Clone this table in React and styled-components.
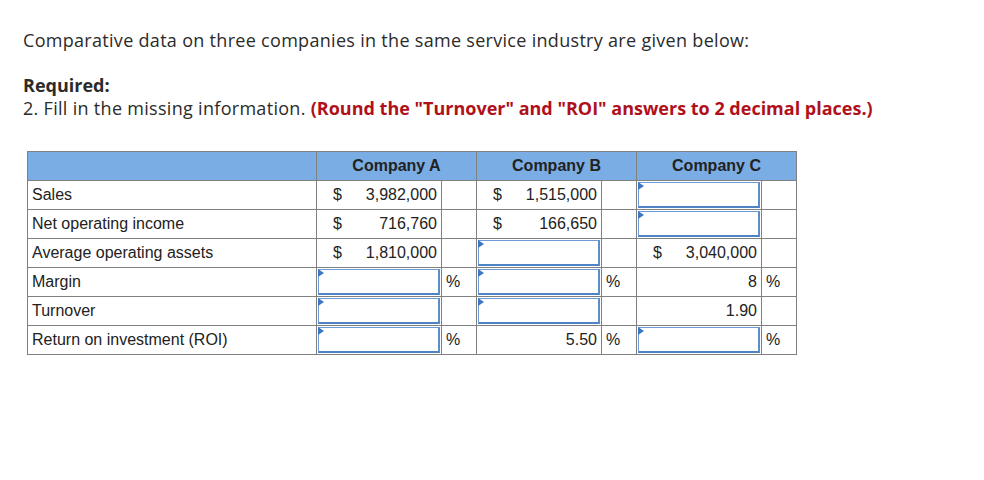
import React from "react";
import styled, { createGlobalStyle } from "styled-components";

const Global = createGlobalStyle`
  html, body { margin: 0; padding: 0; background: #fff; }
  body { font-family: "Open Sans", Lato, sans-serif; }
`;

const Page = styled.div`
  padding: 28px 0 0 23px;
  color: #2b2b2b;
`;

const Intro = styled.p`
  margin: 0;
  font-size: 18px;
  line-height: 24px;
  letter-spacing: 0.3px;
`;

const Required = styled.div`
  margin-top: 22px;
  font-size: 18px;
  line-height: 22px;
  font-weight: 700;
`;

const Instruction = styled.div`
  font-size: 18px;
  line-height: 24px;
  letter-spacing: 0.3px;
`;

const Note = styled.span`
  color: #b0101a;
  font-weight: 700;
  letter-spacing: 0;
`;

const Table = styled.table`
  margin: 31px 0 0 4px;
  border-collapse: collapse;
  font-family: "Liberation Sans", Arial, sans-serif;
  font-size: 16px;
  color: #222;
  table-layout: fixed;
`;

const HeadCell = styled.th`
  background: #7aade4;
  border: 1px solid #808080;
  height: 28px;
  padding: 0;
  font-weight: 700;
  text-align: center;
  width: ${(p) => p.$w || "auto"};
`;

const Row = styled.tr`
  height: 29px;
`;

const Cell = styled.td`
  border: 1px solid #808080;
  padding: 0;
  height: 28px;
  vertical-align: middle;
`;

const Label = styled(Cell)`
  padding-left: 4px;
  width: 284px;
`;

const Val = styled(Cell)`
  width: 124px;
`;

const Pct = styled(Cell)`
  width: 30px;
  padding-left: 4px;
`;

const Money = styled.div`
  display: flex;
  justify-content: space-between;
  padding: 0 4px 0 16px;
`;

const Plain = styled.div`
  text-align: right;
  padding-right: 4px;
`;

const InputBox = styled.div`
  position: relative;
  box-sizing: border-box;
  margin: 0 1px 0 1px;
  height: 26px;
  background: #fff;
  border: 1px solid #6d9bd6;
  border-right: 2px solid #5b8ccc;
  border-bottom: 2px solid #4e84c6;
  &::before {
    content: "";
    position: absolute;
    left: -1px;
    top: -1px;
    border-top: 4px solid transparent;
    border-bottom: 4px solid transparent;
    border-left: 6px solid #3d77c2;
  }
`;

const data = [
  { label: "Sales", a: { m: "3,982,000" }, b: { m: "1,515,000" }, c: { in: true } },
  { label: "Net operating income", a: { m: "716,760" }, b: { m: "166,650" }, c: { in: true } },
  { label: "Average operating assets", a: { m: "1,810,000" }, b: { in: true }, c: { m: "3,040,000" } },
  { label: "Margin", pct: true, a: { in: true }, b: { in: true }, c: { v: "8" } },
  { label: "Turnover", a: { in: true }, b: { in: true }, c: { v: "1.90" } },
  { label: "Return on investment (ROI)", pct: true, a: { in: true }, b: { v: "5.50" }, c: { in: true } },
];

function Value({ d }) {
  if (d.in) return <InputBox />;
  if (d.m)
    return (
      <Money>
        <span>$</span>
        <span>{d.m}</span>
      </Money>
    );
  return <Plain>{d.v}</Plain>;
}

export default function App() {
  return (
    <Page>
      <Global />
      <Intro>Comparative data on three companies in the same service industry are given below:</Intro>
      <Required>Required:</Required>
      <Instruction>
        2. Fill in the missing information.{" "}
        <Note>(Round the "Turnover" and "ROI" answers to 2 decimal places.)</Note>
      </Instruction>
      <Table>
        <thead>
          <tr>
            <HeadCell $w="288px" />
            <HeadCell colSpan={2}>Company A</HeadCell>
            <HeadCell colSpan={2}>Company B</HeadCell>
            <HeadCell colSpan={2}>Company C</HeadCell>
          </tr>
        </thead>
        <tbody>
          {data.map((r) => (
            <Row key={r.label}>
              <Label>{r.label}</Label>
              {[r.a, r.b, r.c].map((d, i) => (
                <React.Fragment key={i}>
                  <Val>
                    <Value d={d} />
                  </Val>
                  <Pct>{r.pct ? "%" : ""}</Pct>
                </React.Fragment>
              ))}
            </Row>
          ))}
        </tbody>
      </Table>
    </Page>
  );
}
